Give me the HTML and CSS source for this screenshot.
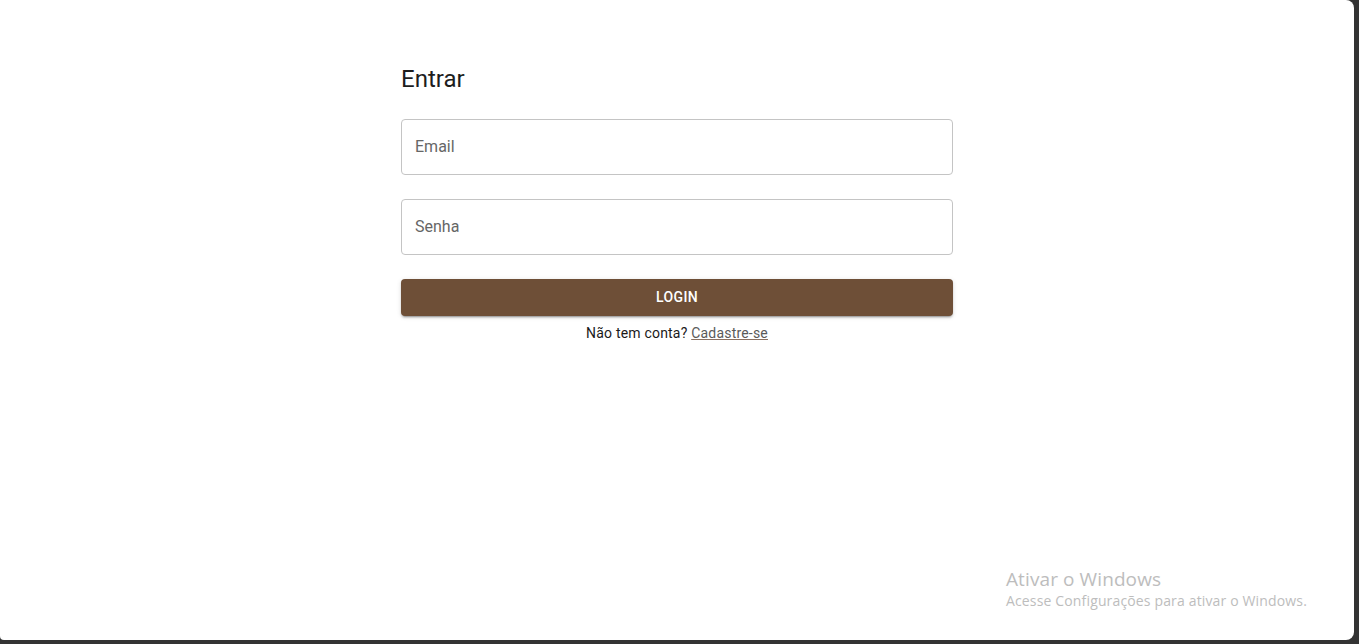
FILE: index.html
```html
<!DOCTYPE html>
<html lang="pt-BR">
<head>
<meta charset="utf-8">
<title>Entrar</title>
<link rel="stylesheet" href="styles.css">
</head>
<body>
<div class="window">
  <main class="container">
    <h1 class="title">Entrar</h1>
    <form class="form">
      <label class="field field-first"><input type="email" placeholder="Email"></label>
      <label class="field"><input type="password" placeholder="Senha"></label>
      <button type="button" class="btn">LOGIN</button>
      <p class="signup">Não tem conta? <a href="#">Cadastre-se</a></p>
    </form>
  </main>
  <div class="watermark">
    <div class="wm-title">Ativar o Windows</div>
    <div class="wm-sub">Acesse Configurações para ativar o Windows.</div>
  </div>
</div>
</body>
</html>
```

FILE: styles.css
```css
html, body {
  margin: 0;
  padding: 0;
  background: #333333;
  width: 1359px;
  height: 644px;
  overflow: hidden;
}
.window {
  position: relative;
  width: 1354px;
  height: 640px;
  background: #ffffff;
  border-radius: 0 8px 8px 4px;
  font-family: Roboto, "Liberation Sans", sans-serif;
}
.container {
  width: 552px;
  margin: 0 auto;
  padding: 63px 24px 0;
}
.title {
  margin: 0 0 8px;
  font-size: 24px;
  font-weight: 400;
  line-height: 32px;
  color: #1d1d1d;
}
.form {
  display: flex;
  flex-direction: column;
}
.field {
  display: block;
  margin: 16px 0 8px;
}
.field input {
  box-sizing: border-box;
  width: 100%;
  height: 56px;
  border: 1px solid #c4c4c4;
  border-radius: 4px;
  padding: 0 13px 2px;
  font-family: Roboto, "Liberation Sans", sans-serif;
  font-size: 16px;
  color: #222;
  outline: none;
  background: #fff;
}
.field input::placeholder {
  color: #666666;
  opacity: 1;
}
.btn {
  margin-top: 16px;
  height: 37px;
  padding: 0 16px 2px;
  border: none;
  border-radius: 4px;
  background: #6e4f37;
  color: #ffffff;
  font-family: Roboto, "Liberation Sans", sans-serif;
  font-size: 14px;
  font-weight: 500;
  letter-spacing: 0.4px;
  box-shadow: 0 3px 1px -2px rgba(0,0,0,0.2), 0 2px 2px 0 rgba(0,0,0,0.14), 0 1px 5px 0 rgba(0,0,0,0.12);
  cursor: pointer;
}
.signup {
  margin: 7px 0 0;
  text-align: center;
  font-size: 14px;
  line-height: 20px;
  letter-spacing: 0.2px;
  color: #1a1a1a;
}
.signup a {
  color: #5a5a5a;
  text-decoration: underline;
  text-decoration-color: #8a7060;
}
.watermark {
  position: absolute;
  left: 1006px;
  top: 567px;
  color: #bdbdbd;
  font-family: "Open Sans", "Noto Sans", sans-serif;
}
.wm-title {
  font-size: 19px;
  line-height: 24px;
  letter-spacing: 0.1px;
}
.wm-sub {
  font-size: 14px;
  line-height: 20px;
  letter-spacing: 0.15px;
}
```
